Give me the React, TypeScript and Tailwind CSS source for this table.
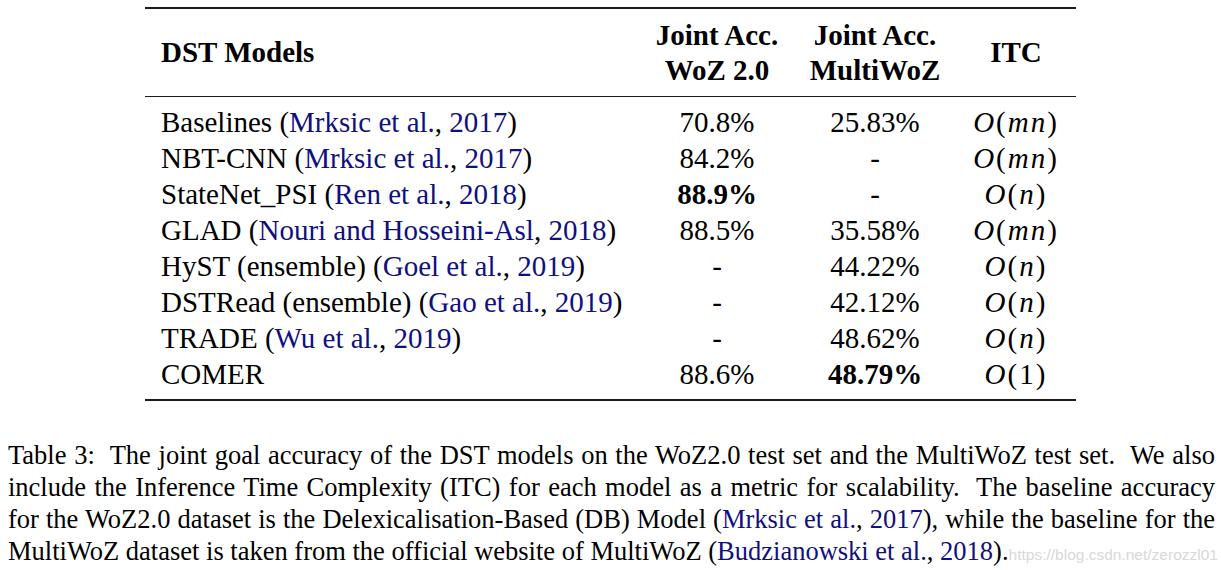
import React from "react";

const serif = { fontFamily: '"Liberation Serif", "Times New Roman", serif' };

const Cite = ({ children }: { children: React.ReactNode }) => (
  <span className="text-[#10107f]">{children}</span>
);

const Big = ({ n }: { n: React.ReactNode }) => (
  <span className="tracking-[2px]">
    <i>O</i>(<i>{n}</i>)
  </span>
);

type Row = { name: React.ReactNode; woz: React.ReactNode; multi: React.ReactNode; itc: React.ReactNode };

const rows: Row[] = [
  {
    name: (
      <>
        Baselines (<Cite>Mrksic et al.</Cite>, <Cite>2017</Cite>)
      </>
    ),
    woz: "70.8%",
    multi: "25.83%",
    itc: <Big n="mn" />,
  },
  {
    name: (
      <>
        NBT-CNN (<Cite>Mrksic et al.</Cite>, <Cite>2017</Cite>)
      </>
    ),
    woz: "84.2%",
    multi: "-",
    itc: <Big n="mn" />,
  },
  {
    name: (
      <>
        StateNet_PSI (<Cite>Ren et al.</Cite>, <Cite>2018</Cite>)
      </>
    ),
    woz: <b>88.9%</b>,
    multi: "-",
    itc: <Big n="n" />,
  },
  {
    name: (
      <>
        GLAD (<Cite>Nouri and Hosseini-Asl</Cite>, <Cite>2018</Cite>)
      </>
    ),
    woz: "88.5%",
    multi: "35.58%",
    itc: <Big n="mn" />,
  },
  {
    name: (
      <>
        HyST (ensemble) (<Cite>Goel et al.</Cite>, <Cite>2019</Cite>)
      </>
    ),
    woz: "-",
    multi: "44.22%",
    itc: <Big n="n" />,
  },
  {
    name: (
      <>
        DSTRead (ensemble) (<Cite>Gao et al.</Cite>, <Cite>2019</Cite>)
      </>
    ),
    woz: "-",
    multi: "42.12%",
    itc: <Big n="n" />,
  },
  {
    name: (
      <>
        TRADE (<Cite>Wu et al.</Cite>, <Cite>2019</Cite>)
      </>
    ),
    woz: "-",
    multi: "48.62%",
    itc: <Big n="n" />,
  },
  {
    name: <>COMER</>,
    woz: "88.6%",
    multi: <b>48.79%</b>,
    itc: (
      <span className="tracking-[2px]">
        <i>O</i>(1)
      </span>
    ),
  },
];

export default function App() {
  return (
    <div className="w-[1221px] h-[570px] bg-white text-black overflow-hidden" style={serif}>
      <div className="pt-[7px] pl-[145px]">
        <div className="w-[931px] border-t-2 border-b-2 border-[#1a1a1a]">
          {/* header */}
          <div className="grid grid-cols-[495px_154px_162px_120px] h-[88px] items-center border-b border-[#1a1a1a] text-[29px] leading-[35px] font-bold">
            <div className="pl-[16px]">DST Models</div>
            <div className="text-center">
              Joint Acc.
              <br />
              WoZ 2.0
            </div>
            <div className="text-center">
              Joint Acc.
              <br />
              MultiWoZ
            </div>
            <div className="text-center">ITC</div>
          </div>
          {/* body */}
          <div className="py-[7px] text-[29px] leading-[36px]">
            {rows.map((r, i) => (
              <div key={i} className="grid grid-cols-[495px_154px_162px_120px] h-[36px] items-center">
                <div className="pl-[16px] whitespace-nowrap">{r.name}</div>
                <div className="text-center">{r.woz}</div>
                <div className="text-center">{r.multi}</div>
                <div className="text-center">{r.itc}</div>
              </div>
            ))}
          </div>
        </div>
      </div>
      {/* caption */}
      <div className="mt-[38px] pl-[8px] w-[1215px] text-[26.5px] leading-[32px]">
        <div className="text-justify [text-align-last:justify] whitespace-nowrap">
          Table 3:&nbsp; The joint goal accuracy of the DST models on the WoZ2.0 test set and the MultiWoZ test set.&nbsp; We also
        </div>
        <div className="text-justify [text-align-last:justify] whitespace-nowrap">
          include the Inference Time Complexity (ITC) for each model as a metric for scalability.&nbsp; The baseline accuracy
        </div>
        <div className="text-justify [text-align-last:justify] whitespace-nowrap">
          for the WoZ2.0 dataset is the Delexicalisation-Based (DB) Model (<Cite>Mrksic et al.</Cite>, <Cite>2017</Cite>), while the baseline for the
        </div>
        <div className="whitespace-nowrap">
          MultiWoZ dataset is taken from the official website of MultiWoZ (<Cite>Budzianowski et al.</Cite>, <Cite>2018</Cite>).
          <span
            className="text-[15.5px] text-[#d8d8d8]"
            style={{ fontFamily: '"Liberation Sans", Arial, sans-serif' }}
          >
            https://blog.csdn.net/zerozzl01
          </span>
        </div>
      </div>
    </div>
  );
}
